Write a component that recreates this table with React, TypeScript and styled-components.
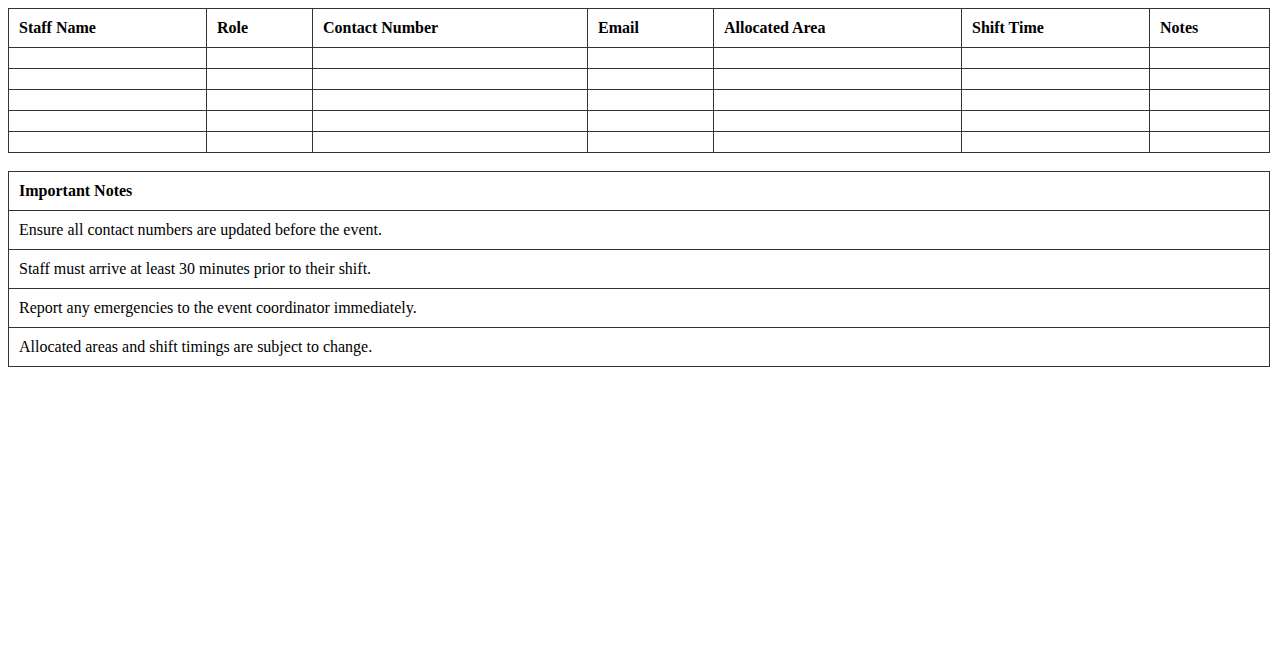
import React from "react";
import styled, { createGlobalStyle } from "styled-components";

const Global = createGlobalStyle`
  body {
    margin: 8px;
    background: #fff;
    font-family: "Liberation Serif", "Times New Roman", serif;
    font-size: 16px;
    color: #000;
  }
`;

const Table = styled.table<{ $gap?: number }>`
  width: 100%;
  border-collapse: collapse;
  table-layout: fixed;
  margin-bottom: ${(p) => p.$gap ?? 0}px;
`;

const Col = styled.col<{ $w?: number }>`
  width: ${(p) => (p.$w ? `${p.$w}px` : "auto")};
`;

const Th = styled.th`
  border: 1px solid #333;
  padding: 10px;
  text-align: left;
  font-weight: bold;
  line-height: 18px;
`;

const Td = styled.td`
  border: 1px solid #333;
  padding: 10px;
  text-align: left;
  line-height: 18px;
`;

const EmptyTd = styled.td`
  border: 1px solid #333;
  padding: 0;
  height: 20px;
`;

const headers = [
  "Staff Name",
  "Role",
  "Contact Number",
  "Email",
  "Allocated Area",
  "Shift Time",
  "Notes",
];
const widths: (number | undefined)[] = [198, 106, 275, 126, 248, 188, undefined];

const notes = [
  "Ensure all contact numbers are updated before the event.",
  "Staff must arrive at least 30 minutes prior to their shift.",
  "Report any emergencies to the event coordinator immediately.",
  "Allocated areas and shift timings are subject to change.",
];

export default function App() {
  return (
    <>
      <Global />
      <Table $gap={18}>
        <colgroup>
          {widths.map((w, i) => (
            <Col key={i} $w={w} />
          ))}
        </colgroup>
        <thead>
          <tr>
            {headers.map((h) => (
              <Th key={h}>{h}</Th>
            ))}
          </tr>
        </thead>
        <tbody>
          {[0, 1, 2, 3, 4].map((r) => (
            <tr key={r}>
              {headers.map((h) => (
                <EmptyTd key={h} />
              ))}
            </tr>
          ))}
        </tbody>
      </Table>
      <Table>
        <thead>
          <tr>
            <Th>Important Notes</Th>
          </tr>
        </thead>
        <tbody>
          {notes.map((n) => (
            <tr key={n}>
              <Td>{n}</Td>
            </tr>
          ))}
        </tbody>
      </Table>
    </>
  );
}
